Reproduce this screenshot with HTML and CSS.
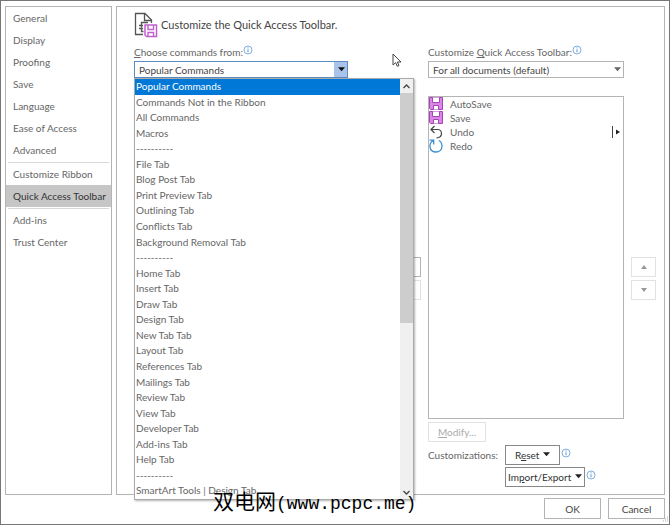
FILE: index.html
```html
<!DOCTYPE html>
<html lang="en">
<head>
  <meta charset="UTF-8" />
  <meta name="viewport" content="width=device-width, initial-scale=1.0" />
  <title>Word Options</title>
  <link rel="stylesheet" href="styles.css">
</head>
<body>
  <!-- shared icons -->
  <svg class="sprite" aria-hidden="true">
    <symbol id="info" viewBox="0 0 10 10">
      <circle cx="5" cy="5" r="4" fill="#fff" stroke="#7fafe0" />
      <path d="M5 4.3V7.3M5 2.4V3.4" stroke="#5a94d0" />
    </symbol>
    <symbol id="disk" viewBox="0 0 14 14">
      <path d="M0.5 0.5H13.5V12.5H1.5L0.5 11.5Z" fill="#dc85e6" stroke="#a445b4" />
      <path d="M3.5 0.5V5.5H10.5V0.5" fill="#fff" stroke="#a445b4" />
      <path d="M4.5 12.5V8.5H9.5V12.5" fill="#fff" stroke="#a445b4" />
    </symbol>
  </svg>

  <div class="dialog">
    <div class="panels">
      <nav class="sidebar">
        <a href="#">General</a>
        <a href="#">Display</a>
        <a href="#">Proofing</a>
        <a href="#">Save</a>
        <a href="#">Language</a>
        <a href="#">Ease of Access</a>
        <a href="#">Advanced</a>
        <hr>
        <a href="#">Customize Ribbon</a>
        <a href="#" class="active">Quick Access Toolbar</a>
        <hr>
        <a href="#">Add-ins</a>
        <a href="#">Trust Center</a>
      </nav>

      <main class="content">
        <header class="title">
          <svg width="24" height="26" viewBox="0 0 24 26" fill="none">
            <path d="M9 22.5H1.5V1.5H11L17.5 8V11" stroke="#555" stroke-width="1.3" />
            <path d="M10.5 1.5V8.5H17.5" stroke="#555" stroke-width="1.3" />
            <path d="M14 10.5H7.5V13M5 13.5H9M7.5 13V15.5M5 16.5H9M7.5 17V19.5H9.5" stroke="#555" stroke-width="1.3" />
            <path d="M11 13H22.5V24.5H12.5L11 23Z" fill="#fff" stroke="#c05fd0" stroke-width="1.5" />
            <path d="M14 13V17.5H19.5V13M14 24.5V20.5H19.5V24.5" stroke="#c05fd0" stroke-width="1.4" />
          </svg>
          <h1>Customize the Quick Access Toolbar.</h1>
        </header>

        <div class="columns">
          <section class="commands">
            <div class="label">
              <label for="source"><u>C</u>hoose commands from:</label>
              <svg class="info"><use href="#info" /></svg>
            </div>
            <div class="picker open">
              <select id="source">
                <option>Popular Commands</option>
              </select>
              <svg class="arrow" viewBox="0 0 8 5"><path d="M0 0H8L4 4.5Z" fill="#111" /></svg>
              <div class="dropdown">
                <ul role="listbox" aria-label="Commands">
                  <li role="option" class="selected" aria-selected="true">Popular Commands</li>
                  <li role="option">Commands Not in the Ribbon</li>
                  <li role="option">All Commands</li>
                  <li role="option">Macros</li>
                  <li role="option">----------</li>
                  <li role="option">File Tab</li>
                  <li role="option">Blog Post Tab</li>
                  <li role="option">Print Preview Tab</li>
                  <li role="option">Outlining Tab</li>
                  <li role="option">Conflicts Tab</li>
                  <li role="option">Background Removal Tab</li>
                  <li role="option">----------</li>
                  <li role="option">Home Tab</li>
                  <li role="option">Insert Tab</li>
                  <li role="option">Draw Tab</li>
                  <li role="option">Design Tab</li>
                  <li role="option">New Tab Tab</li>
                  <li role="option">Layout Tab</li>
                  <li role="option">References Tab</li>
                  <li role="option">Mailings Tab</li>
                  <li role="option">Review Tab</li>
                  <li role="option">View Tab</li>
                  <li role="option">Developer Tab</li>
                  <li role="option">Add-ins Tab</li>
                  <li role="option">Help Tab</li>
                  <li role="option">----------</li>
                  <li role="option">SmartArt Tools | Design Tab</li>
                </ul>
                <div class="scrollbar">
                  <svg viewBox="0 0 13 14"><path d="M3.5 9L6.5 6L9.5 9" fill="none" stroke="#444" stroke-width="1.3" /></svg>
                  <div class="thumb"></div>
                  <svg viewBox="0 0 13 14"><path d="M3.5 6L6.5 9L9.5 6" fill="none" stroke="#444" stroke-width="1.3" /></svg>
                </div>
              </div>
            </div>
          </section>

          <div class="transfer">
            <button type="button" aria-label="Add"></button>
            <button type="button" aria-label="Remove" disabled></button>
          </div>

          <section class="toolbar">
            <div class="label">
              <label for="target">Customize <u>Q</u>uick Access Toolbar:</label>
              <svg class="info"><use href="#info" /></svg>
            </div>
            <div class="picker">
              <select id="target">
                <option>For all documents (default)</option>
              </select>
              <svg class="arrow" viewBox="0 0 8 5"><path d="M0 0H8L4 4.5Z" fill="#666" /></svg>
            </div>
            <ul class="items">
              <li><svg viewBox="0 0 14 14"><use href="#disk" width="14" height="14" /></svg>AutoSave</li>
              <li><svg viewBox="0 0 14 14"><use href="#disk" width="14" height="14" /></svg>Save</li>
              <li>
                <svg viewBox="0 0 14 14" fill="none" stroke="#444" stroke-width="1.2"><path d="M5.5 1L2 4.5L5.5 8M2 4.5H8.5C11 4.5 12.5 6.5 12.5 8.5C12.5 11 10.5 12.7 7.5 13" /></svg>Undo
                <svg class="split" viewBox="0 0 10 14"><path d="M1.5 1V13" stroke="#444" /><path d="M5 4.5L9 7L5 9.5Z" fill="#222" /></svg>
              </li>
              <li>
                <svg viewBox="0 0 14 14" fill="none" stroke="#3d8fd1" stroke-width="1.3"><path d="M0.5 1.2H4.7V5.5M4.5 1.5C1.5 3 0.7 5.5 1 7.8C1.5 11 4 13 7 13C10.5 13 13 10.5 13 7C13 4.5 11.8 2.5 9.8 1.5" /></svg>Redo
              </li>
            </ul>
            <button type="button" class="modify" disabled><u>M</u>odify...</button>
            <div class="customizations">
              <span>Customizations:</span>
              <div class="actions">
                <div class="action">
                  <button type="button">R<u>e</u>set <svg viewBox="0 0 8 5"><path d="M0 0H8L4 4.5Z" fill="#222" /></svg></button>
                  <svg class="info"><use href="#info" /></svg>
                </div>
                <div class="action">
                  <button type="button">Im<u>p</u>ort/Export <svg viewBox="0 0 8 5"><path d="M0 0H8L4 4.5Z" fill="#222" /></svg></button>
                  <svg class="info"><use href="#info" /></svg>
                </div>
              </div>
            </div>
          </section>

          <div class="order">
            <button type="button" aria-label="Move up" disabled><svg viewBox="0 0 6 4"><path d="M0 4H6L3 0Z" fill="#999" /></svg></button>
            <button type="button" aria-label="Move down" disabled><svg viewBox="0 0 6 4"><path d="M0 0H6L3 4Z" fill="#999" /></svg></button>
          </div>
        </div>
      </main>
    </div>

    <footer class="buttons">
      <button type="button">OK</button>
      <button type="button">Cancel</button>
    </footer>

    <svg class="grip" width="8" height="8"><path d="M6 1h1M4 3h1M6 3h1M2 5h1M4 5h1M6 5h1" stroke="#aaa" /></svg>
    <svg class="cursor" width="10" height="15" viewBox="0 0 10 15"><path d="M1 1V12L3.7 9.6L5.3 13.3L7 12.5L5.4 9H9Z" fill="#fff" stroke="#444" /></svg>
    <div class="watermark">双电网<span>(www.pcpc.me)</span></div>
  </div>
</body>
</html>
```

FILE: styles.css
```css
:root {
  --text: #666;
  --line: #b4b4b4;
  --blue: #0078d7;
}
* {
  box-sizing: border-box;
}
body {
  margin: 0;
  font-family: Lato, "Noto Sans CJK SC", sans-serif;
  font-size: 10px;
  line-height: 14px;
  color: var(--text);
  background: #fff;
}
ul {
  list-style: none;
  margin: 0;
  padding: 0;
}
button, select {
  font: inherit;
  color: inherit;
  background: #fff;
  border: 1px solid var(--line);
  border-radius: 0;
  padding: 0;
}
.sprite {
  display: none;
}
.dialog {
  position: relative;
  display: flex;
  flex-direction: column;
  min-height: 100vh;
  padding: 5px 4px;
  border: 1px solid #777;
}
.panels {
  flex: 1;
  display: flex;
  gap: 4px;
}

/* left navigation */
.sidebar {
  flex: none;
  width: 107px;
  border: 1px solid var(--line);
}
.sidebar a {
  display: block;
  padding: 4px 7px;
  color: var(--text);
  text-decoration: none;
  white-space: nowrap;
}
.sidebar a.active {
  background: #c6c6c6;
  color: #333;
}
.sidebar hr {
  margin: 1px 2px 0;
  border: 0;
  border-top: 1px solid #d8d8d8;
}

.content {
  flex: 1;
  display: flex;
  flex-direction: column;
  padding: 5px 8px 5px 17px;
  border: 1px solid var(--line);
}
.title {
  display: flex;
  align-items: center;
  gap: 3px;
}
.title h1 {
  margin: 0;
  font-size: 11px;
  font-weight: normal;
  color: #444;
}
.columns {
  flex: 1;
  display: grid;
  grid-template-columns: 214fr 66px 196fr 25px;
  gap: 7px;
  padding-top: 7px;
}
.label {
  display: flex;
  height: 16px;
  white-space: nowrap;
}
.info {
  width: 10px;
  height: 10px;
}
.picker {
  position: relative;
}
.picker select {
  display: block;
  width: 100%;
  height: 17px;
  padding-left: 4px;
  appearance: none;
  color: #444;
}
.picker .arrow {
  position: absolute;
  right: 3px;
  top: 6px;
  width: 7px;
  height: 5px;
}
.picker.open select {
  border-color: #5b8cc4;
  background: linear-gradient(#a9c4ea, #a9c4ea) right / 13px 100% no-repeat, #fff;
}

/* open list */
.dropdown {
  position: absolute;
  z-index: 1;
  top: 100%;
  left: 0;
  width: 280px;
  height: 422px;
  display: flex;
  background: #fff;
  border: 1px solid #aaa;
  box-shadow: 1px 1px 2px rgba(0, 0, 0, 0.3);
}
.dropdown ul {
  flex: 1;
  display: grid;
  grid-auto-rows: 1fr;
}
.dropdown li {
  padding-left: 1px;
}
.dropdown .selected {
  background: var(--blue);
  color: #fff;
}
.scrollbar {
  display: flex;
  flex-direction: column;
  width: 13px;
  background: #f0f0f0;
}
.scrollbar svg {
  flex: none;
  height: 14px;
}
.scrollbar .thumb {
  height: 230px;
  margin-bottom: auto;
  background: #cdcdcd;
}

.transfer, .order {
  display: flex;
  flex-direction: column;
  gap: 3px;
  padding-top: 212px;
}
.transfer button, .order button {
  height: 20px;
}
.order button {
  display: flex;
  align-items: center;
  justify-content: center;
}
.order svg {
  width: 6px;
  height: 4px;
}
button:disabled {
  color: #aaa;
  border-color: #e2e2e2;
}

.toolbar {
  display: flex;
  flex-direction: column;
  align-items: flex-start;
}
.toolbar .picker {
  width: 100%;
}
.items {
  flex: 1;
  width: 100%;
  margin-top: 18px;
  border: 1px solid var(--line);
}
.items li {
  display: flex;
  align-items: center;
  gap: 7px;
}
.items svg {
  width: 14px;
  height: 14px;
}
.items .split {
  width: 10px;
  margin-left: auto;
  margin-right: 2px;
}
.modify {
  width: 58px;
  height: 20px;
  margin-top: 3px;
}
.customizations {
  display: flex;
  gap: 7px;
  margin-top: 3px;
  white-space: nowrap;
}
.customizations span {
  padding-top: 3px;
}
.action {
  display: flex;
  gap: 1px;
  padding-bottom: 2px;
}
.action .info {
  margin-top: 3px;
}
.action button {
  height: 20px;
  padding: 0 2px;
  border-color: #888;
  color: #333;
}
.action:first-child button {
  padding: 0 9px;
}
.action button svg {
  width: 7px;
  height: 5px;
  margin: 0 0 2px 1px;
}

.buttons {
  display: flex;
  justify-content: flex-end;
  gap: 7px;
  padding-top: 3px;
}
.buttons button {
  width: 57px;
  height: 21px;
  color: #444;
}

.grip {
  position: absolute;
  right: 0;
  bottom: 0;
}
.cursor {
  position: absolute;
  left: 391px;
  top: 52px;
}
.watermark {
  position: absolute;
  z-index: 2;
  left: 212px;
  top: 487px;
  font: 21px/24px "Noto Sans CJK SC", sans-serif;
  color: #000;
  white-space: nowrap;
}
.watermark span {
  font: 18px/24px "Liberation Mono", monospace;
}
```
